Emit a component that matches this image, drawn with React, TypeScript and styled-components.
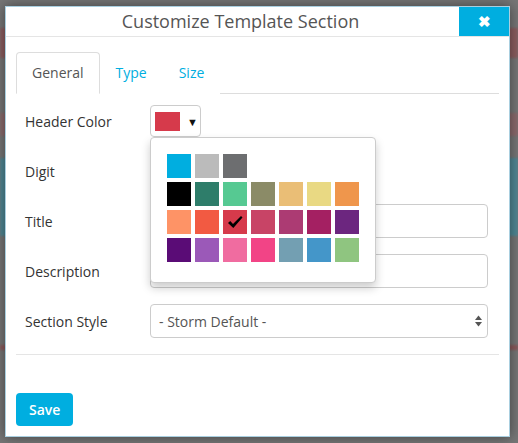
import React, { useState } from 'react';
import styled, { createGlobalStyle } from 'styled-components';

const GlobalStyle = createGlobalStyle`
	html, body {
		margin: 0;
		padding: 0;
	}
	body {
		font-family: 'Open Sans', 'Noto Sans', sans-serif;
		background: #767676;
	}
`;

const PALETTE: string[][] = [
	['#00aee0', '#bbbbbb', '#6d6e70'],
	['#000000', '#2e7d6a', '#56c992', '#8b8b67', '#eabe76', '#e9d983', '#ef964c'],
	['#fe9366', '#f25a42', '#d63a4b', '#c84466', '#ac3b73', '#a42062', '#6c267f'],
	['#5a0c76', '#9b59b8', '#f06ca0', '#f24486', '#739fb2', '#4496c9', '#8fc580'],
];

const Page = styled.div`
	position: relative;
	width: 518px;
	height: 443px;
	overflow: hidden;
	background: #767676;
`;

const Backdrop = styled.div`
	display: flex;
	flex-direction: column;
	height: 100%;
	filter: blur(1px);
`;

const Band = styled.div<{ $h: number; $color?: string }>`
	height: ${(p) => p.$h}px;
	background: ${(p) => p.$color || 'transparent'};
`;

const Overlay = styled.div`
	position: absolute;
	inset: 0;
	padding: 6px 8px 6px 5px;
	display: flex;
`;

const Modal = styled.div`
	flex: 1;
	display: flex;
	flex-direction: column;
	background: #fff;
	border: 1px solid #a9cfe0;
	box-shadow: 0 0 12px rgba(0, 0, 0, 0.45);
`;

const Header = styled.div`
	display: flex;
	height: 29px;
	border-bottom: 1px solid #e5e5e5;
`;

const Title = styled.div`
	flex: 1;
	padding-left: 16px;
	text-align: center;
	font-size: 18px;
	line-height: 29px;
	color: #555;
`;

const CloseButton = styled.button`
	width: 50px;
	border: none;
	background: #00aee0;
	color: #fff;
	font-size: 15px;
	font-weight: bold;
	padding: 0;
	cursor: pointer;
`;

const Body = styled.div`
	flex: 1;
	display: flex;
	flex-direction: column;
	padding: 15px 10px 10px;
`;

const Tabs = styled.div`
	display: flex;
	border-bottom: 1px solid #ddd;
`;

const Tab = styled.div<{ $active?: boolean }>`
	height: 42px;
	padding: 0 15px 2px;
	box-sizing: border-box;
	display: flex;
	align-items: center;
	font-size: 14px;
	margin-bottom: -1px;
	border: 1px solid ${(p) => (p.$active ? '#ddd' : 'transparent')};
	border-bottom-color: ${(p) => (p.$active ? '#fff' : 'transparent')};
	border-radius: 4px 4px 0 0;
	background: #fff;
	color: ${(p) => (p.$active ? '#555' : '#00aee0')};
	cursor: pointer;
`;

const Form = styled.div`
	display: flex;
	flex-direction: column;
	gap: 16px;
	padding: 10px 11px 16px 0;
	border-bottom: 1px solid #e5e5e5;
`;

const Row = styled.div`
	position: relative;
	display: grid;
	grid-template-columns: 134px 1fr;
	align-items: center;
	height: 34px;
`;

const Label = styled.div`
	padding-left: 9px;
	font-size: 14px;
	color: #333;
`;

const TextInput = styled.div`
	height: 32px;
	border: 1px solid #ccc;
	border-radius: 4px;
`;

const SelectBox = styled.div`
	height: 32px;
	border: 1px solid #ccc;
	border-radius: 4px;
	display: flex;
	align-items: center;
	justify-content: space-between;
	padding: 0 5px 0 8px;
	font-size: 14px;
	color: #555;
`;

const ColorButton = styled.div`
	height: 30px;
	width: 45px;
	border: 1px solid #ccc;
	border-radius: 4px;
	display: flex;
	align-items: center;
	gap: 7px;
	padding-left: 4px;
`;

const Swatch = styled.div<{ $color: string }>`
	width: 25px;
	height: 19px;
	background: ${(p) => p.$color};
`;

const Caret = styled.span`
	font-size: 11px;
	color: #111;
`;

const Popover = styled.div`
	position: absolute;
	left: 134px;
	top: 33px;
	z-index: 2;
	width: 192px;
	padding: 16px 16px 20px;
	background: #fff;
	border: 1px solid #ccc;
	border-radius: 4px;
	box-shadow: 0 5px 10px rgba(0, 0, 0, 0.2);
	display: flex;
	flex-direction: column;
	gap: 4px;
`;

const SwatchRow = styled.div`
	display: flex;
	gap: 4px;
`;

const Chip = styled.div<{ $color: string }>`
	width: 24px;
	height: 24px;
	background: ${(p) => p.$color};
	display: flex;
	align-items: center;
	justify-content: center;
	cursor: pointer;
`;

const Footer = styled.div`
	margin-top: auto;
	display: flex;
`;

const SaveButton = styled.button`
	height: 33px;
	padding: 0 13px;
	border: none;
	border-radius: 4px;
	background: #00aee0;
	color: #fff;
	font-family: inherit;
	font-size: 14px;
	font-weight: 600;
	cursor: pointer;
`;

const CheckIcon = () => (
	<svg width='16' height='14' viewBox='0 0 16 14'>
		<path d='M1 8 L3.2 6 L6 9 L14 1 L15.5 2.4 L6.3 13 Z' fill='#000' />
	</svg>
);

const SortIcon = () => (
	<svg width='7' height='12' viewBox='0 0 7 12'>
		<path d='M3.5 0.5 L7 5 H0 Z' fill='#555' />
		<path d='M0 7 H7 L3.5 11.5 Z' fill='#555' />
	</svg>
);

export default function App() {
	const [color, setColor] = useState('#d63a4b');
	const [tab, setTab] = useState('General');

	return (
		<Page>
			<GlobalStyle />
			<Backdrop>
				<Band $h={28} />
				<Band $h={30} $color='#8b5d5f' />
				<Band $h={55} />
				<Band $h={23} $color='#8a6a6c' />
				<Band $h={22} />
				<Band $h={78} $color='#4f8794' />
				<Band $h={109} />
				<Band $h={5} $color='#8b5a5c' />
			</Backdrop>
			<Overlay>
				<Modal>
					<Header>
						<Title>Customize Template Section</Title>
						<CloseButton>✖</CloseButton>
					</Header>
					<Body>
						<Tabs>
							{['General', 'Type', 'Size'].map((t) => (
								<Tab key={t} $active={tab === t} onClick={() => setTab(t)}>
									{t}
								</Tab>
							))}
						</Tabs>
						<Form>
							<Row>
								<Label>Header Color</Label>
								<ColorButton>
									<Swatch $color={color} />
									<Caret>▼</Caret>
								</ColorButton>
								<Popover>
									{PALETTE.map((row, i) => (
										<SwatchRow key={i}>
											{row.map((c) => (
												<Chip key={c} $color={c} onClick={() => setColor(c)}>
													{c === color && <CheckIcon />}
												</Chip>
											))}
										</SwatchRow>
									))}
								</Popover>
							</Row>
							<Row>
								<Label>Digit</Label>
							</Row>
							<Row>
								<Label>Title</Label>
								<TextInput />
							</Row>
							<Row>
								<Label>Description</Label>
								<TextInput />
							</Row>
							<Row>
								<Label>Section Style</Label>
								<SelectBox>
									<span>- Storm Default -</span>
									<SortIcon />
								</SelectBox>
							</Row>
						</Form>
						<Footer>
							<SaveButton>Save</SaveButton>
						</Footer>
					</Body>
				</Modal>
			</Overlay>
		</Page>
	);
}
